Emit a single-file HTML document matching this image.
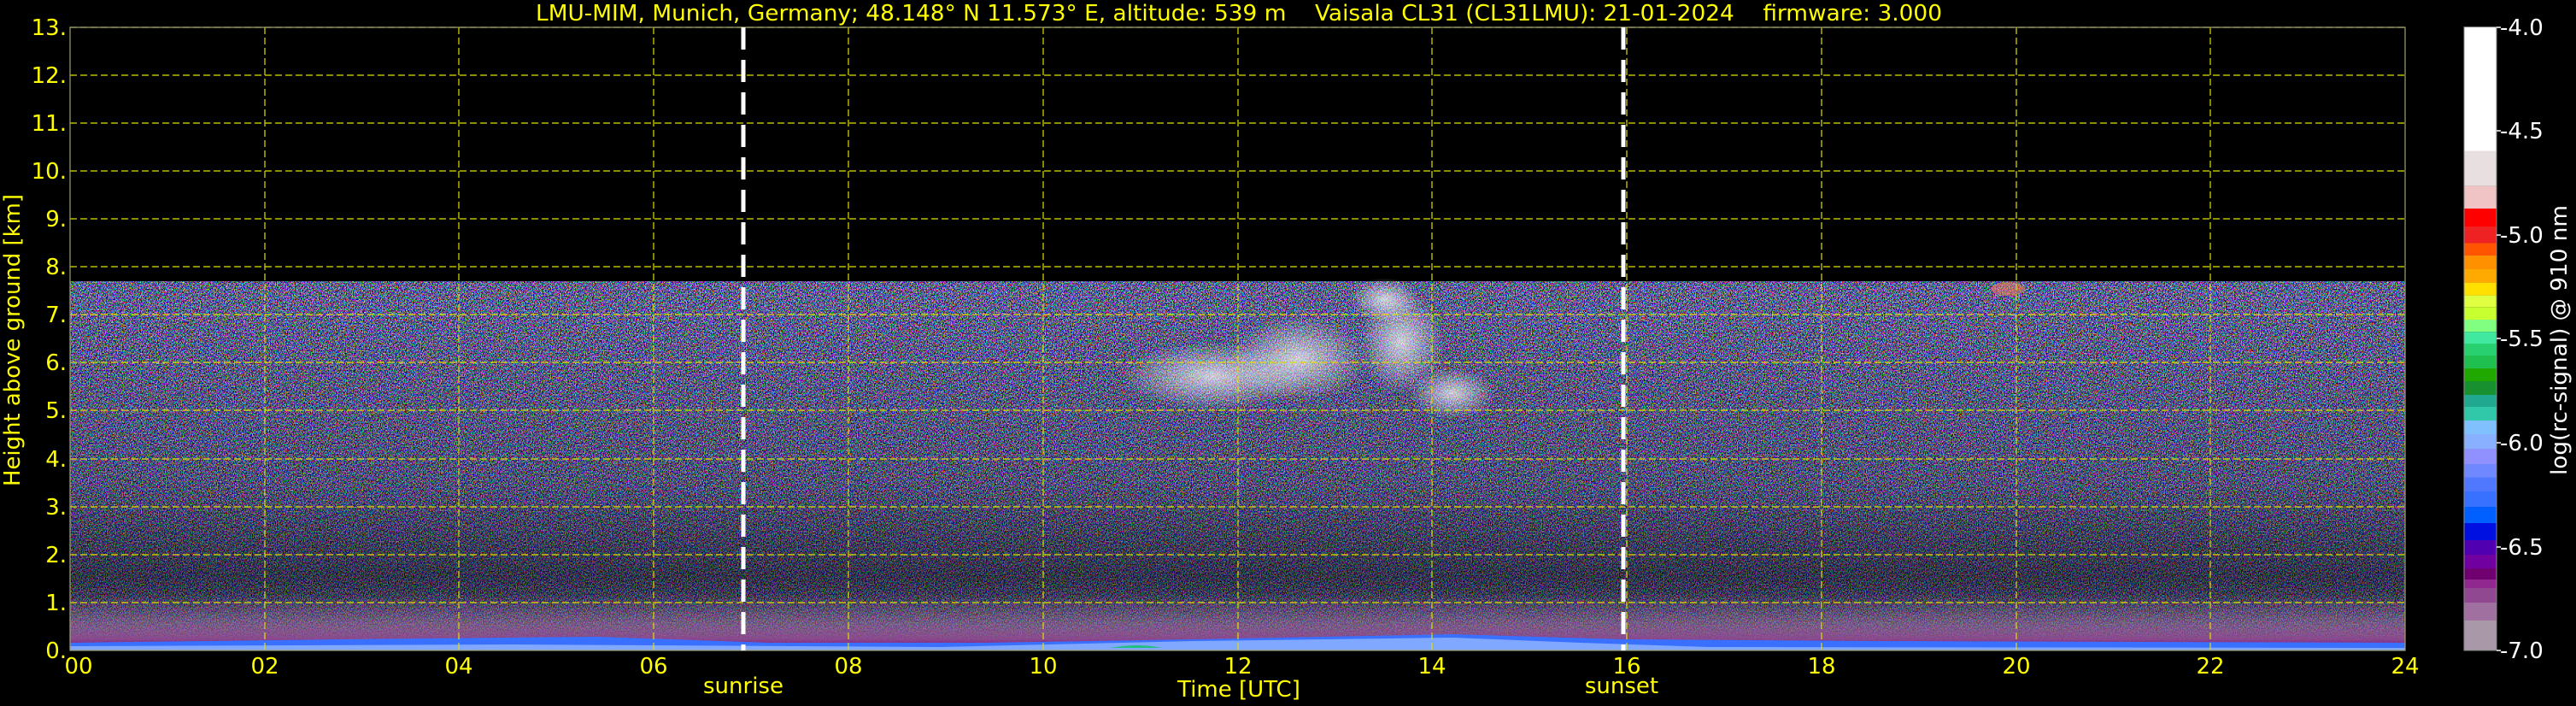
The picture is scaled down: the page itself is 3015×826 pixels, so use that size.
<!DOCTYPE html>
<html><head><meta charset="utf-8"><style>
html,body{margin:0;padding:0;background:#000;width:3015px;height:826px;overflow:hidden}
svg{display:block}
text{font-family:"DejaVu Sans","Liberation Sans",sans-serif}
</style></head><body>
<svg width="3015" height="826" viewBox="0 0 3015 826" xmlns="http://www.w3.org/2000/svg">
<defs>
<filter id="nz" x="82" y="329" width="2733" height="432" filterUnits="userSpaceOnUse" primitiveUnits="userSpaceOnUse">
<feTurbulence type="fractalNoise" baseFrequency="0.9 0.6" numOctaves="2" seed="7" result="t"/>
<feComponentTransfer in="t" result="s">
<feFuncR type="linear" slope="3.5" intercept="-1.25"/>
<feFuncG type="linear" slope="3.5" intercept="-1.25"/>
<feFuncB type="linear" slope="3.5" intercept="-1.25"/>
</feComponentTransfer>
<feComponentTransfer in="s">
<feFuncR type="discrete" tableValues="0 0 0 0.1 0.3 0.45 0.6 1"/>
<feFuncG type="discrete" tableValues="0 0 0 0.15 0.35 0.55 0.4 1"/>
<feFuncB type="discrete" tableValues="0 0 0.3 0.7 1 0.9 1 1"/>
<feFuncA type="linear" slope="0" intercept="1"/>
</feComponentTransfer>
</filter>
<linearGradient id="dark" x1="0" y1="0" x2="0" y2="1">
<stop offset="0" stop-color="#000" stop-opacity="0.15"/>
<stop offset="0.55" stop-color="#000" stop-opacity="0.3"/>
<stop offset="0.8" stop-color="#000" stop-opacity="0.55"/>
<stop offset="1" stop-color="#000" stop-opacity="0.3"/>
</linearGradient>
<linearGradient id="haze" x1="0" y1="0" x2="0" y2="1">
<stop offset="0" stop-color="#a070a0" stop-opacity="0"/>
<stop offset="0.5" stop-color="#a070a0" stop-opacity="0.5"/>
<stop offset="0.8" stop-color="#904890" stop-opacity="0.9"/>
<stop offset="1" stop-color="#800080" stop-opacity="1"/>
</linearGradient>
<radialGradient id="cl">
<stop offset="0" stop-color="#fff" stop-opacity="0.7"/>
<stop offset="1" stop-color="#fff" stop-opacity="0"/>
</radialGradient>
</defs>

<rect x="82" y="329" width="2733" height="432" fill="#fff" filter="url(#nz)"/>
<rect x="82" y="329" width="2733" height="432" fill="url(#dark)"/>
<ellipse cx="1420" cy="440" rx="110" ry="40" fill="url(#cl)"/>
<ellipse cx="1520" cy="420" rx="80" ry="50" fill="url(#cl)"/>
<ellipse cx="1640" cy="400" rx="50" ry="60" fill="url(#cl)"/>
<ellipse cx="1700" cy="460" rx="50" ry="30" fill="url(#cl)"/>
<ellipse cx="1620" cy="350" rx="40" ry="25" fill="url(#cl)"/>
<ellipse cx="2350" cy="338" rx="20" ry="8" fill="#ff8060" opacity="0.5"/>
<rect x="82" y="695" width="2733" height="66" fill="url(#haze)"/>
<path d="M82 752 L400 748 L700 745 L900 752 L1150 752 L1400 748 L1700 742 L1900 748 L2200 750 L2815 752 L2815 761 L82 761Z" fill="#3a70ff"/>
<path d="M82 756 L600 754 L1100 757 L1400 750 L1700 746 L1850 752 L2000 757 L2815 758 L2815 761 L82 761Z" fill="#80a8ff"/>
<path d="M1300 758 Q1330 752 1360 758Z" fill="#20c080"/>

<g stroke="#e0e000" stroke-width="1.2" stroke-dasharray="8,4" fill="none">
<line x1="82" y1="32" x2="2815" y2="32"/>
<line x1="82" y1="88" x2="2815" y2="88"/>
<line x1="82" y1="144" x2="2815" y2="144"/>
<line x1="82" y1="200" x2="2815" y2="200"/>
<line x1="82" y1="256" x2="2815" y2="256"/>
<line x1="82" y1="312" x2="2815" y2="312"/>
<line x1="82" y1="368" x2="2815" y2="368"/>
<line x1="82" y1="424" x2="2815" y2="424"/>
<line x1="82" y1="480" x2="2815" y2="480"/>
<line x1="82" y1="537" x2="2815" y2="537"/>
<line x1="82" y1="593" x2="2815" y2="593"/>
<line x1="82" y1="649" x2="2815" y2="649"/>
<line x1="82" y1="705" x2="2815" y2="705"/>
<line x1="310" y1="32" x2="310" y2="761"/>
<line x1="537" y1="32" x2="537" y2="761"/>
<line x1="765" y1="32" x2="765" y2="761"/>
<line x1="993" y1="32" x2="993" y2="761"/>
<line x1="1221" y1="32" x2="1221" y2="761"/>
<line x1="1449" y1="32" x2="1449" y2="761"/>
<line x1="1676" y1="32" x2="1676" y2="761"/>
<line x1="1904" y1="32" x2="1904" y2="761"/>
<line x1="2132" y1="32" x2="2132" y2="761"/>
<line x1="2360" y1="32" x2="2360" y2="761"/>
<line x1="2587" y1="32" x2="2587" y2="761"/>
</g>
<rect x="82" y="32" width="2733" height="729" fill="none" stroke="#a0a070" stroke-width="1.2"/>
<g stroke="#fff" stroke-width="5" stroke-dasharray="26,12">
<line x1="870" y1="32" x2="870" y2="761"/>
<line x1="1900" y1="32" x2="1900" y2="761"/>
</g>

<text x="1450" y="24" fill="#ffff00" font-size="26" text-anchor="middle" textLength="1646" lengthAdjust="spacingAndGlyphs">LMU-MIM, Munich, Germany; 48.148° N 11.573° E, altitude: 539 m&#160;&#160;&#160;&#160;Vaisala CL31 (CL31LMU): 21-01-2024&#160;&#160;&#160;&#160;firmware: 3.000</text>

<g fill="#ffff00" font-size="26" text-anchor="end">
<text x="78" y="41">13.</text><text x="78" y="97">12.</text><text x="78" y="153">11.</text>
<text x="78" y="209">10.</text><text x="78" y="265">9.</text><text x="78" y="321">8.</text>
<text x="78" y="377">7.</text><text x="78" y="433">6.</text><text x="78" y="489">5.</text>
<text x="78" y="546">4.</text><text x="78" y="602">3.</text><text x="78" y="658">2.</text>
<text x="78" y="714">1.</text><text x="78" y="770">0.</text>
</g>
<text transform="translate(23,398) rotate(-90)" fill="#ffff00" font-size="26" text-anchor="middle" textLength="342" lengthAdjust="spacingAndGlyphs">Height above ground [km]</text>

<g fill="#ffff00" font-size="26" text-anchor="middle">
<text x="92" y="788">00</text><text x="310" y="788">02</text><text x="537" y="788">04</text>
<text x="765" y="788">06</text><text x="993" y="788">08</text><text x="1221" y="788">10</text>
<text x="1449" y="788">12</text><text x="1676" y="788">14</text><text x="1904" y="788">16</text>
<text x="2132" y="788">18</text><text x="2360" y="788">20</text><text x="2587" y="788">22</text>
<text x="2815" y="788">24</text>
<text x="870" y="811">sunrise</text>
<text x="1450" y="815">Time [UTC]</text>
<text x="1898" y="811">sunset</text>
</g>

<g>
<rect x="2884" y="31.6" width="38" height="145" fill="#ffffff"/>
<rect x="2884" y="176.5" width="38" height="41.1" fill="#e8e0e0"/>
<rect x="2884" y="217.6" width="38" height="26.4" fill="#f0c4c4"/>
<rect x="2884" y="244" width="38" height="21" fill="#ff0000"/>
<rect x="2884" y="265" width="38" height="19.5" fill="#ee2222"/>
<rect x="2884" y="284.5" width="38" height="14.5" fill="#ff5500"/>
<rect x="2884" y="299" width="38" height="16" fill="#ff9000"/>
<rect x="2884" y="315" width="38" height="16" fill="#ffaa00"/>
<rect x="2884" y="331" width="38" height="14.6" fill="#ffe000"/>
<rect x="2884" y="345.6" width="38" height="13.7" fill="#e0ff40"/>
<rect x="2884" y="359.3" width="38" height="14.7" fill="#c8ff30"/>
<rect x="2884" y="374" width="38" height="14.3" fill="#80ff80"/>
<rect x="2884" y="388.3" width="38" height="13.7" fill="#40e8a0"/>
<rect x="2884" y="402" width="38" height="14" fill="#28d070"/>
<rect x="2884" y="416" width="38" height="15" fill="#20c050"/>
<rect x="2884" y="431" width="38" height="15" fill="#20a800"/>
<rect x="2884" y="446" width="38" height="16" fill="#189030"/>
<rect x="2884" y="462" width="38" height="14" fill="#20a890"/>
<rect x="2884" y="476" width="38" height="16" fill="#30c8a8"/>
<rect x="2884" y="492" width="38" height="16" fill="#80c0ff"/>
<rect x="2884" y="508" width="38" height="17" fill="#88b0ff"/>
<rect x="2884" y="525" width="38" height="18" fill="#9090ff"/>
<rect x="2884" y="543" width="38" height="15.5" fill="#7088ff"/>
<rect x="2884" y="558.5" width="38" height="16.5" fill="#5078ff"/>
<rect x="2884" y="575" width="38" height="18" fill="#3870ff"/>
<rect x="2884" y="593" width="38" height="19" fill="#0060ff"/>
<rect x="2884" y="612" width="38" height="20" fill="#0010e0"/>
<rect x="2884" y="632" width="38" height="17" fill="#5000b0"/>
<rect x="2884" y="649" width="38" height="16" fill="#7000a0"/>
<rect x="2884" y="665" width="38" height="13" fill="#700070"/>
<rect x="2884" y="678" width="38" height="10" fill="#902890"/>
<rect x="2884" y="688" width="38" height="17" fill="#904890"/>
<rect x="2884" y="705" width="38" height="21" fill="#a070a0"/>
<rect x="2884" y="726" width="38" height="35" fill="#a898a8"/>
<rect x="2884" y="31.6" width="38" height="729.4" fill="none" stroke="#888" stroke-width="1"/>
</g>
<g stroke="#fff" stroke-width="1.5">
<line x1="2922" y1="32" x2="2927" y2="32"/><line x1="2922" y1="153" x2="2927" y2="153"/>
<line x1="2922" y1="275" x2="2927" y2="275"/><line x1="2922" y1="396" x2="2927" y2="396"/>
<line x1="2922" y1="518" x2="2927" y2="518"/><line x1="2922" y1="640" x2="2927" y2="640"/>
<line x1="2922" y1="761" x2="2927" y2="761"/>
</g>
<g fill="#fff" font-size="26">
<text x="2926" y="41">-4.0</text><text x="2926" y="162">-4.5</text><text x="2926" y="284">-5.0</text>
<text x="2926" y="405">-5.5</text><text x="2926" y="527">-6.0</text><text x="2926" y="649">-6.5</text>
<text x="2926" y="770">-7.0</text>
</g>
<text transform="translate(3004,398) rotate(-90)" fill="#fff" font-size="26" text-anchor="middle" textLength="316" lengthAdjust="spacingAndGlyphs">log(rc-signal) @ 910 nm</text>
</svg>
</body></html>
